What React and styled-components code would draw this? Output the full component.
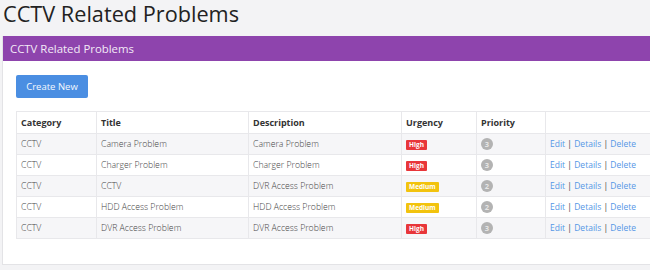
import React from "react";
import styled, { createGlobalStyle } from "styled-components";

const Global = createGlobalStyle`
  html, body { margin: 0; padding: 0; background: #f3f3f5; overflow: hidden; }
  body { font-family: "Open Sans", "Liberation Sans", sans-serif; color: #333; }
`;

const Page = styled.div`
  width: 650px;
  height: 270px;
  overflow: hidden;
  padding: 0 0 0 2px;
  box-sizing: border-box;
`;

const Heading = styled.h1`
  margin: 0 0 8px 1px;
  font-size: 21.7px;
  line-height: 28px;
  font-weight: 400;
  color: #222;
  white-space: nowrap;
`;

const Panel = styled.section`
  width: 680px;
  background: #fff;
  border: 1px solid #e3e3e6;
  border-top: none;
`;

const PanelHeader = styled.div`
  height: 25px;
  background: #8e44ad;
  color: #f3eaf7;
  font-size: 11.4px;
  line-height: 25px;
  padding-left: 7px;
  white-space: nowrap;
`;

const PanelBody = styled.div`
  padding: 14px 13px 25px 13px;
`;

const Button = styled.button`
  display: block;
  width: 72px;
  height: 23px;
  padding: 0;
  border: none;
  border-radius: 2px;
  background: #4a8ee2;
  color: #f4f8fe;
  font-family: inherit;
  font-size: 9.5px;
  margin-bottom: 13px;
`;

const Table = styled.table`
  width: 100%;
  table-layout: fixed;
  border-collapse: collapse;
  font-size: 8.7px;
`;

const Th = styled.th`
  text-align: left;
  font-weight: 700;
  font-size: 9px;
  color: #333;
  height: 21px;
  padding: 0 4px;
  border: 1px solid #e8e8eb;
  white-space: nowrap;
`;

const Tr = styled.tr`
  background: ${(p) => (p.$striped ? "#f6f6f8" : "#fff")};
`;

const Td = styled.td`
  height: 20px;
  padding: 0 4px;
  border: 1px solid #e8e8eb;
  color: #444;
  font-weight: 300;
  white-space: nowrap;
`;

const Badge = styled.span`
  display: inline-block;
  padding: 0 3px;
  height: 10px;
  line-height: 10px;
  border-radius: 1px;
  font-size: 6.5px;
  font-weight: 700;
  color: #fff;
  background: ${(p) => (p.$level === "High" ? "#e8363a" : "#f2c30e")};
  vertical-align: middle;
`;

const Circle = styled.span`
  display: inline-block;
  width: 12px;
  height: 12px;
  border-radius: 50%;
  background: #b3b3b3;
  color: #e6e6e6;
  font-size: 7.5px;
  font-weight: 700;
  line-height: 12px;
  text-align: center;
  vertical-align: middle;
`;

const Actions = styled.span`
  color: #444;
  font-weight: 400;
  font-size: 8.5px;
`;

const Link = styled.a`
  color: #5596e6;
  text-decoration: none;
`;

const rows = [
  ["CCTV", "Camera Problem", "Camera Problem", "High", 3],
  ["CCTV", "Charger Problem", "Charger Problem", "High", 3],
  ["CCTV", "CCTV", "DVR Access Problem", "Medium", 2],
  ["CCTV", "HDD Access Problem", "HDD Access Problem", "Medium", 2],
  ["CCTV", "DVR Access Problem", "DVR Access Problem", "High", 3],
];

export default function App() {
  return (
    <Page>
      <Global />
      <Heading>CCTV Related Problems</Heading>
      <Panel>
        <PanelHeader>CCTV Related Problems</PanelHeader>
        <PanelBody>
          <Button>Create New</Button>
          <Table>
            <colgroup>
              <col style={{ width: 80 }} />
              <col style={{ width: 152 }} />
              <col style={{ width: 153 }} />
              <col style={{ width: 75 }} />
              <col style={{ width: 69 }} />
              <col />
            </colgroup>
            <thead>
              <tr>
                <Th>Category</Th>
                <Th>Title</Th>
                <Th>Description</Th>
                <Th>Urgency</Th>
                <Th>Priority</Th>
                <Th></Th>
              </tr>
            </thead>
            <tbody>
              {rows.map((r, i) => (
                <Tr key={i} $striped={i % 2 === 0}>
                  <Td>{r[0]}</Td>
                  <Td>{r[1]}</Td>
                  <Td>{r[2]}</Td>
                  <Td>
                    <Badge $level={r[3]}>{r[3]}</Badge>
                  </Td>
                  <Td>
                    <Circle>{r[4]}</Circle>
                  </Td>
                  <Td>
                    <Actions>
                      <Link href="#">Edit</Link> | <Link href="#">Details</Link> | <Link href="#">Delete</Link>
                    </Actions>
                  </Td>
                </Tr>
              ))}
            </tbody>
          </Table>
        </PanelBody>
      </Panel>
    </Page>
  );
}
